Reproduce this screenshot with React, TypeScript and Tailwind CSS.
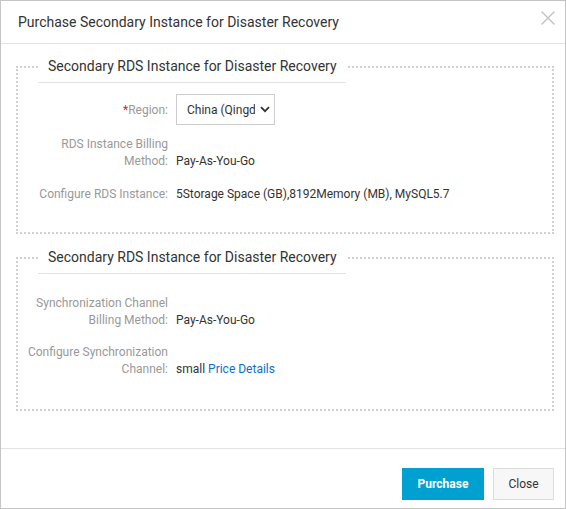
import React from "react";

function Chevron() {
  return (
    <svg width="10" height="7" viewBox="0 0 10 7" className="shrink-0">
      <path d="M1 1.2 L5 5.2 L9 1.2" fill="none" stroke="#333" strokeWidth="1.8" />
    </svg>
  );
}

function Row({ label, children, className = "" }: { label: React.ReactNode; children: React.ReactNode; className?: string }) {
  return (
    <div className={"flex items-end leading-[17px] " + className}>
      <div className="w-[150px] shrink-0 text-right text-[#999]">{label}</div>
      <div className="ml-2 text-[#333]">{children}</div>
    </div>
  );
}

export default function App() {
  return (
    <div
      className="w-[566px] h-[509px] border border-[#c4c4c4] bg-white flex flex-col text-[12px]"
      style={{ fontFamily: 'Roboto, "Liberation Sans", Arial, sans-serif' }}
    >
      <div className="h-[43px] border-b border-[#e3e3e3] flex items-center justify-between pl-[17px] pr-[9px] shrink-0">
        <div className="text-[14px] text-[#333] whitespace-nowrap">Purchase Secondary Instance for Disaster Recovery</div>
        <svg width="16" height="16" viewBox="0 0 16 16" className="mb-[8px]">
          <path d="M1.5 1.5 L14.5 14.5 M14.5 1.5 L1.5 14.5" stroke="#c2c2c2" strokeWidth="1.4" fill="none" />
        </svg>
      </div>

      <div className="flex-1 pt-[6px] pl-[15px] pr-[11px]">
        <fieldset className="border-2 border-dotted border-[#d0d0d0] pb-[29px]">
          <legend className="ml-5 w-[308px] h-[33px] px-[10px] border-b border-[#e3e3e3] text-[14px] text-[#333] leading-[32px] whitespace-nowrap">
            Secondary RDS Instance for Disaster Recovery
          </legend>
          <div className="mt-[11px] flex items-center h-[31px]">
            <div className="w-[150px] shrink-0 text-right text-[#999]">
              <span className="text-[#e02020]">*</span>Region:
            </div>
            <div className="ml-2 w-[99px] h-[31px] border border-[#ccc] flex items-center pl-[10px] pr-[4px] gap-[5px] text-[#333]">
              <span className="w-[71px] overflow-hidden whitespace-nowrap">China (Qingdao)</span>
              <Chevron />
            </div>
          </div>
          <Row className="mt-[11px]" label={<>RDS Instance Billing<br />Method:</>}>
            Pay-As-You-Go
          </Row>
          <Row className="mt-[16px]" label="Configure RDS Instance:">
            5Storage Space (GB),8192Memory (MB), MySQL5.7
          </Row>
        </fieldset>

        <fieldset className="mt-[7px] border-2 border-dotted border-[#d0d0d0] pb-[31px]">
          <legend className="ml-5 w-[308px] h-[33px] px-[10px] border-b border-[#e3e3e3] text-[14px] text-[#333] leading-[32px] whitespace-nowrap">
            Secondary RDS Instance for Disaster Recovery
          </legend>
          <Row className="mt-[21px]" label={<>Synchronization Channel<br />Billing Method:</>}>
            Pay-As-You-Go
          </Row>
          <Row className="mt-[15px]" label={<>Configure Synchronization<br />Channel:</>}>
            small <span className="text-[#0a70c8]">Price Details</span>
          </Row>
        </fieldset>
      </div>

      <div className="h-[60px] shrink-0 border-t border-[#e3e3e3] flex justify-end items-start pt-[19px] pr-[11px] gap-[9px]">
        <button className="w-[82px] h-[32px] bg-[#00a0d0] text-white text-[12px] font-bold">Purchase</button>
        <button className="w-[61px] h-[32px] bg-[#f7f7f7] border border-[#dcdcdc] text-[#333] text-[12px]">Close</button>
      </div>
    </div>
  );
}
